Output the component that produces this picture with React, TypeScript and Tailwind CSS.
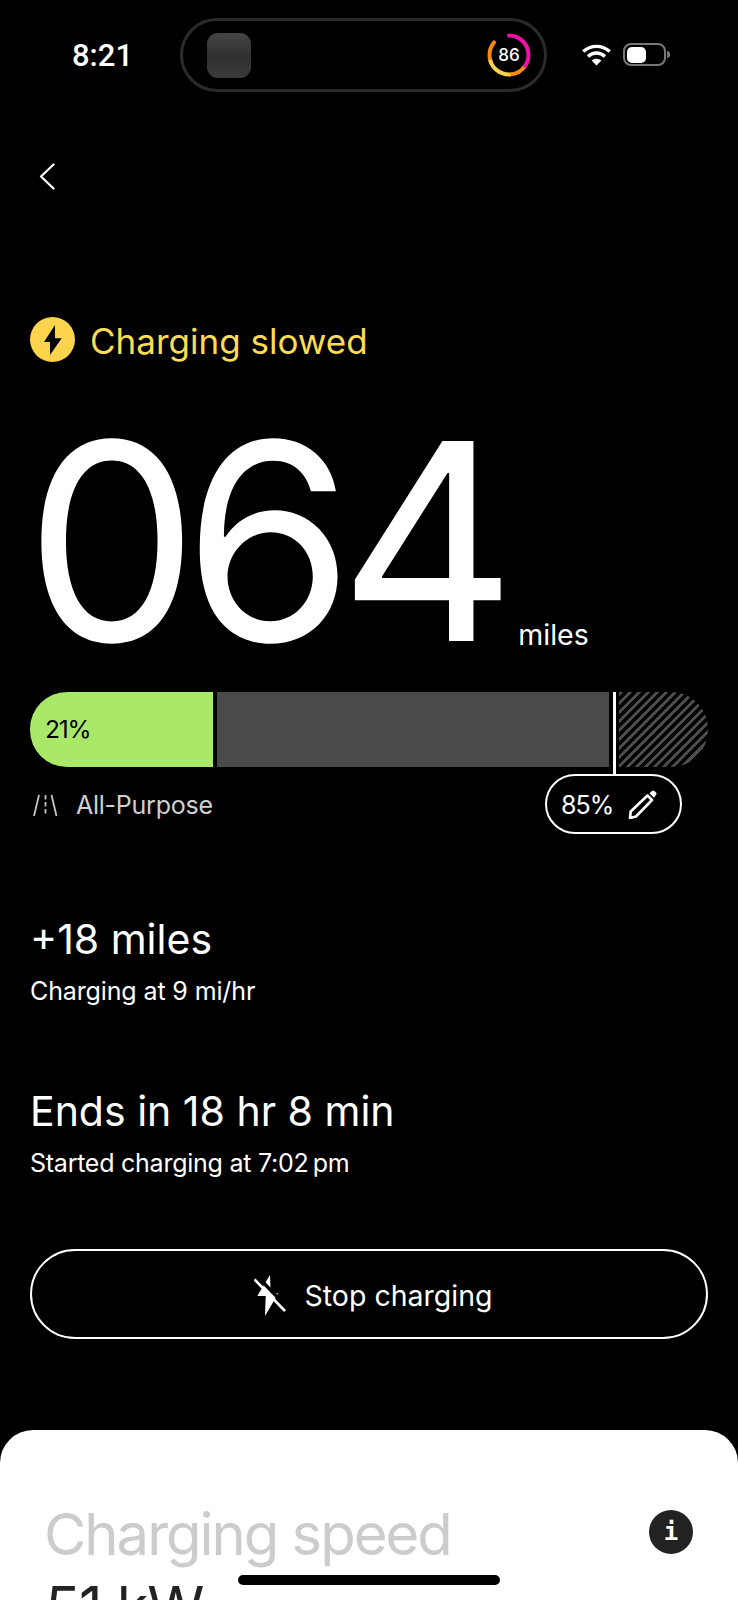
import React from "react";

function Wifi() {
  return (
    <svg width="29" height="22" viewBox="0 0 29 22" fill="none" stroke="#fff" strokeWidth="3.4">
      <path d="M1.3 7.6C8.6 0.6 20.4 0.6 27.7 7.6" />
      <path d="M6 12.4C10.8 7.9 18.2 7.9 23 12.4" />
      <path d="M14.5 21.5L9.6 16.6C12.4 14.2 16.6 14.2 19.4 16.6Z" fill="#fff" stroke="none" />
    </svg>
  );
}

function Pencil() {
  return (
    <svg width="29" height="29" viewBox="0 0 29 29" fill="none">
      <path d="M19.5 5.5L24 10L8 26.5L2 28L2.7 21.5Z" stroke="#fff" strokeWidth="2.6" strokeLinejoin="round" />
      <path d="M21.5 3.2L24 1C24.8 0.3 25.6 0.3 26.4 1L28 2.6C28.7 3.4 28.7 4.3 28 5L26 7.8Z" fill="#fff" />
    </svg>
  );
}

export default function App() {
  return (
    <div className="relative h-[1600px] w-[738px] overflow-hidden bg-black font-['Inter',sans-serif] text-white">
      {/* status bar */}
      <div className="flex h-[92px] items-start pt-[18px]">
        <div className="ml-[72px] mt-[20px] w-[108px] text-[31px] font-medium leading-[36px] font-['Roboto',sans-serif]">8:21</div>
        <div className="flex h-[74px] w-[367px] items-center justify-between rounded-full border-[3px] border-[#2b2b2b] pl-[24px] pr-[13px]">
          <div className="h-[45px] w-[44px] rounded-[11px] bg-gradient-to-b from-[#464646] via-[#303030] to-[#3a3a3a]" />
          <div className="relative flex h-[44px] w-[44px] items-center justify-center">
            <svg width="44" height="44" viewBox="0 0 44 44" className="absolute left-0 top-0" fill="none" strokeWidth="4">
              <g transform="rotate(-90 22 22)">
                <circle cx="22" cy="22" r="19.5" stroke="#fb8a14" pathLength={360} strokeDasharray="60 300" strokeDashoffset="-250" strokeLinecap="round" />
                <circle cx="22" cy="22" r="19.5" stroke="#fcd24a" pathLength={360} strokeDasharray="80 280" strokeDashoffset="-175" />
                <circle cx="22" cy="22" r="19.5" stroke="#fb8a14" pathLength={360} strokeDasharray="55 305" strokeDashoffset="-122" />
                <circle cx="22" cy="22" r="19.5" stroke="#ec12a6" pathLength={360} strokeDasharray="124 236" strokeLinecap="round" />
              </g>
            </svg>
            <span className="text-[17px] font-medium leading-none">86</span>
          </div>
        </div>
        <div className="ml-[35px] mt-[26px]"><Wifi /></div>
        <div className="ml-[12px] mt-[25px] flex items-center">
          <div className="flex h-[23px] w-[43px] items-center rounded-[8px] border-[2px] border-[#777] pl-[2px]">
            <div className="h-[16px] w-[19px] rounded-[5px] bg-white" />
          </div>
          <div className="ml-[1px] h-[7px] w-[3px] rounded-r-full bg-[#777]" />
        </div>
      </div>

      {/* back */}
      <div className="ml-[39px] mt-[71px] h-[27px]">
        <svg width="16" height="27" viewBox="0 0 16 27" fill="none" stroke="#fff" strokeWidth="2.2" strokeLinecap="round" strokeLinejoin="round">
          <path d="M14.5 1.5L2 13.5L14.5 25.5" />
        </svg>
      </div>

      {/* status label */}
      <div className="ml-[30px] mt-[127px] flex h-[45px] items-center gap-[15px]">
        <div className="flex h-[45px] w-[45px] items-center justify-center rounded-full bg-[#fcd34d]">
          <svg width="45" height="45" viewBox="0 0 45 45"><path d="M25 8L14 25H20L20 38L31.7 21.3H25Z" fill="#000" /></svg>
        </div>
        <div className="mt-[3px] text-[35px] leading-[45px] text-[#fbdc52]">Charging slowed</div>
      </div>

      {/* range */}
      <div className="ml-[25px] mt-[41px] flex h-[277px] items-end">
        <div className="text-[275px] leading-[277px] tracking-[-0.055em]">064</div>
        <div className="mb-[27px] ml-[17px] text-[28.5px] leading-[36px]">miles</div>
      </div>

      {/* bar */}
      <div className="mx-[30px] mt-[12px] flex h-[75px] items-stretch">
        <div className="flex w-[183px] items-center rounded-l-[37px] bg-[#aae86a] pl-[15px] text-[24.5px] tracking-[-0.05em] text-black">21%</div>
        <div className="ml-[4px] w-[392px] bg-[#4a4a4a]" />
        <div className="relative ml-[4px] w-[3px] bg-white">
          <div className="absolute left-0 top-[75px] h-[8px] w-[3px] bg-white" />
        </div>
        <div className="ml-[3px] w-[89px] rounded-r-[37px] bg-[repeating-linear-gradient(135deg,#4d4d4d_0,#4d4d4d_3px,#000_3px,#000_6.4px)]" />
      </div>

      {/* under bar */}
      <div className="ml-[30px] mt-[7px] flex h-[60px] items-center">
        <svg width="27" height="24" viewBox="0 0 27 24" className="ml-[3px] mt-[2px]" fill="none" stroke="#c4c4c4" strokeWidth="1.8">
          <path d="M1 23L6 2" />
          <path d="M12.5 2V23" strokeDasharray="4.5 2.5" />
          <path d="M18.5 2L23.5 23" />
        </svg>
        <div className="ml-[16px] mt-[3px] w-[469px] text-[25px] tracking-[-0.01em] text-[#d0d0d0]">All-Purpose</div>
        <div className="flex h-[60px] w-[137px] items-center rounded-full border-2 border-white pl-[14px]">
          <span className="mt-[2px] text-[25px] leading-none tracking-[-0.04em]">85%</span>
          <span className="ml-[15px]"><Pencil /></span>
        </div>
      </div>

      {/* stats */}
      <div className="ml-[30px] mt-[79px] text-[41px] leading-[52px]">+18 miles</div>
      <div className="ml-[30px] mt-[11px] text-[25px] leading-[30px] tracking-[-0.005em]">Charging at 9 mi/hr</div>
      <div className="ml-[30px] mt-[79px] text-[41px] leading-[52px]">Ends in 18 hr 8 min</div>
      <div className="ml-[30px] mt-[11px] text-[25px] leading-[30px] tracking-[-0.01em]">Started charging at 7:02{"\u2009"}pm</div>

      {/* stop */}
      <div className="mx-[30px] mt-[71px] flex h-[90px] items-center justify-center gap-[19px] rounded-[45px] border-2 border-white pl-[8px]">
        <svg width="32" height="41" viewBox="0 0 32 41" className="mt-[3px]">
          <path d="M16 0L3.3 21H11.7L11 41L24.3 18.3H16.7Z" fill="#fff" />
          <path d="M3 1L34 33" stroke="#000" strokeWidth="3.5" />
          <path d="M0.5 4.5L31 36" stroke="#fff" strokeWidth="2.6" />
        </svg>
        <div className="mt-[3px] text-[28.5px] leading-[36px]">Stop charging</div>
      </div>

      {/* sheet */}
      <div className="mt-[91px] h-[300px] rounded-t-[33px] bg-white pl-[44px] pr-[45px] pt-[72px]">
        <div className="flex items-start justify-between">
          <div className="mt-[-3px] text-[58px] leading-[70px] tracking-[-0.035em] text-[#cccccc]">Charging speed</div>
          <div className="mt-[8px] flex h-[44px] w-[44px] items-center justify-center rounded-full bg-[#222222] text-[24px] font-bold text-white font-['DejaVu_Sans_Mono',monospace]">i</div>
        </div>
        <div className="ml-[1px] mt-[3px] text-[58px] leading-[70px] tracking-[-0.02em] text-[#222222]">51 kW</div>
      </div>

      {/* home indicator */}
      <div className="absolute bottom-[15px] left-[238px] h-[10px] w-[262px] rounded-full bg-black" />
    </div>
  );
}
